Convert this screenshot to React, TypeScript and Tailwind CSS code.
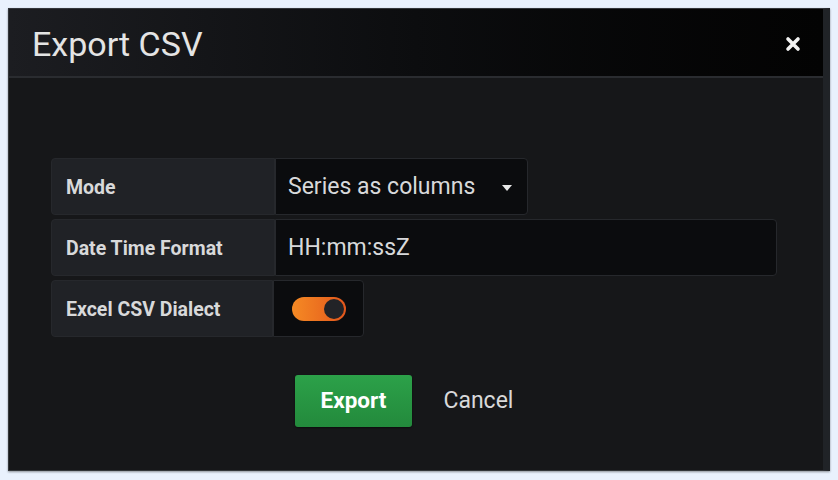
export default function App() {
  return (
    <div className="min-h-screen w-full bg-[#e9f1fd] pt-2 pl-2 font-['Roboto',sans-serif]">
      <div className="flex h-[463px] w-[822px] flex-col border border-[#33363b] border-r-[7px] border-r-[#202327] bg-[#161719] shadow-[0_1px_2px_rgba(0,0,0,0.4)]">
        {/* header */}
        <div className="flex h-[69px] shrink-0 items-center justify-between border-b-2 border-[#2a2c30] bg-gradient-to-r from-[#1c1d21] via-[#0c0d0f] to-[#030303] pl-[23px] pr-[22px]">
          <h1 className="mt-[2px] text-[34px] leading-none font-normal text-[#e4e4e4]">Export CSV</h1>
          <svg width="16" height="16" viewBox="0 0 16 16" className="mt-[2px]">
            <path d="M3 3 L13 13 M13 3 L3 13" stroke="#f2f2f2" strokeWidth="3.6" strokeLinecap="round" />
          </svg>
        </div>

        {/* body */}
        <div className="flex flex-1 flex-col pt-[80px] pl-[42px] pr-[46px]">
          <div className="flex flex-col gap-[4px]">
            <div className="flex h-[57px]">
              <div className="flex w-[224px] items-center rounded-l-[4px] border border-[#26282c] bg-[#202226] pt-[3px] pl-[14px] text-[19.5px] font-bold text-[#d8d9da]">
                Mode
              </div>
              <div className="flex w-[253px] items-center justify-between rounded-r-[4px] border border-[#26282c] bg-[#0b0c0e] pt-[2px] pl-[12px] pr-[14px] text-[23px] text-[#d8d9da]">
                <span>Series as columns</span>
                <svg width="12" height="8" viewBox="0 0 12 8">
                  <path d="M1 1 L11 1 L6 7 Z" fill="#e8e8e8" />
                </svg>
              </div>
            </div>

            <div className="flex h-[57px]">
              <div className="flex w-[224px] items-center rounded-l-[4px] border border-[#26282c] bg-[#202226] pt-[3px] pl-[14px] text-[19.5px] font-bold text-[#d8d9da]">
                Date Time Format
              </div>
              <div className="flex flex-1 items-center rounded-r-[4px] border border-[#26282c] bg-[#0b0c0e] pt-[2px] pl-[12px] text-[23px] text-[#d8d9da]">
                HH:mm:ssZ
              </div>
            </div>

            <div className="flex h-[57px]">
              <div className="flex w-[222px] items-center rounded-l-[4px] border border-[#26282c] bg-[#202226] pt-[3px] pl-[14px] text-[19.5px] font-bold text-[#d8d9da]">
                Excel CSV Dialect
              </div>
              <div className="flex w-[91px] items-center rounded-r-[4px] border border-[#26282c] bg-[#0b0c0e] pl-[18px]">
                <div className="flex h-[24px] w-[54px] items-center justify-end rounded-full bg-gradient-to-r from-[#f58a24] to-[#e2561c] pr-[2px]">
                  <div className="h-[20px] w-[20px] rounded-full bg-[#222327]" />
                </div>
              </div>
            </div>
          </div>

          <div className="mt-[38px] ml-[6px] flex justify-center gap-[5px]">
            <button className="h-[52px] rounded-[3px] bg-gradient-to-b from-[#2ca149] to-[#238a3c] px-[26px] text-[22.5px] font-bold text-white shadow-[0_1px_2px_rgba(0,0,0,0.5)]">
              Export
            </button>
            <button className="h-[52px] px-[26px] text-[23px] text-[#d8d9da]">Cancel</button>
          </div>
        </div>
      </div>
    </div>
  );
}
